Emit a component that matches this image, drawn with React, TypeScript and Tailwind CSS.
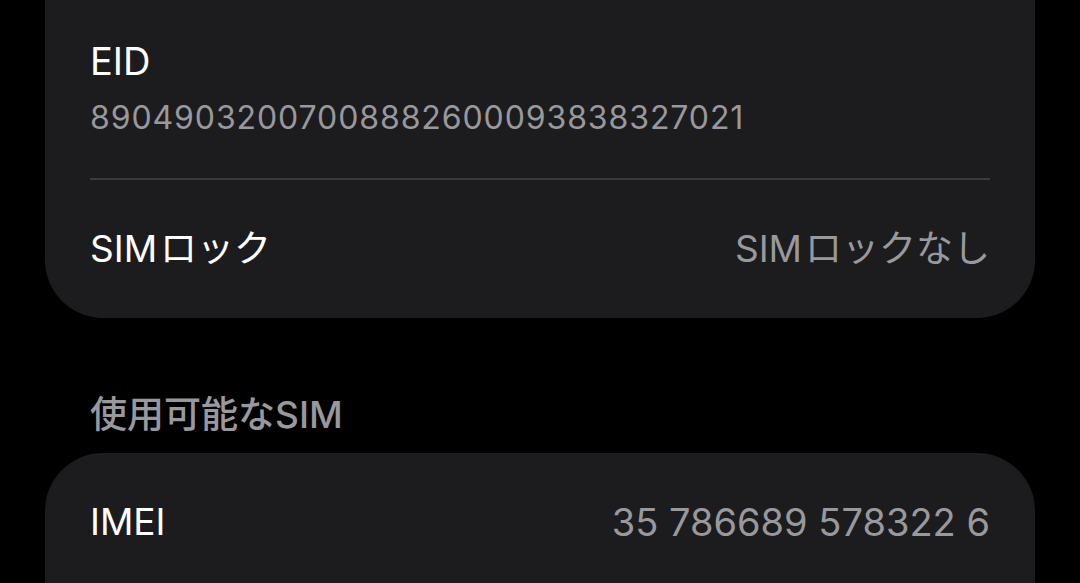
import React from "react";

const font = {
  fontFamily: '"Inter", "Noto Sans CJK JP", sans-serif',
};

export default function App() {
  return (
    <div className="w-[1080px] h-[583px] bg-black overflow-hidden" style={font}>
      <div className="mx-[45px] bg-[#1c1c1e] rounded-b-[58px] px-[45px]">
        <div className="pt-[36px] pb-[40px]">
          <div className="text-white text-[38px] leading-[50px]">EID</div>
          <div className="mt-[12px] text-[#98989d] text-[32px] leading-[40px] tracking-[0.9px]">
            89049032007008882600093838327021
          </div>
        </div>
        <div className="h-[2px] bg-[#3a3a3c]" />
        <div className="h-[138px] flex items-center justify-between">
          <span className="text-white text-[37px] leading-[46px]">
            SIM<span className="ml-[3px]">ロック</span>
          </span>
          <span className="text-[#98989d] text-[37px] leading-[46px]">
            SIM<span className="ml-[3px]">ロックなし</span>
          </span>
        </div>
      </div>
      <div className="px-[90px] pt-[74px] pb-[15px]">
        <div className="text-[#98989d] text-[37px] leading-[46px] font-medium">使用可能なSIM</div>
      </div>
      <div className="mx-[45px] bg-[#1c1c1e] rounded-t-[58px] px-[45px] h-[200px]">
        <div className="h-[138px] flex items-center justify-between">
          <span className="text-white text-[37px] leading-[46px]">IMEI</span>
          <span className="text-[#98989d] text-[38px] leading-[46px]">35 786689 578322 6</span>
        </div>
      </div>
    </div>
  );
}
